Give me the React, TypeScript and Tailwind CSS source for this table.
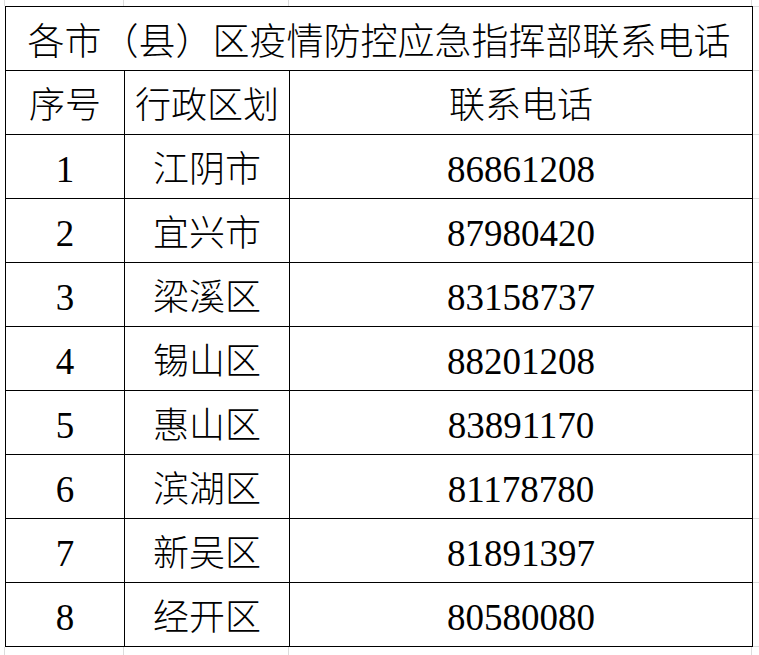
const rows = [
  { no: "1", area: "江阴市", tel: "86861208" },
  { no: "2", area: "宜兴市", tel: "87980420" },
  { no: "3", area: "梁溪区", tel: "83158737" },
  { no: "4", area: "锡山区", tel: "88201208" },
  { no: "5", area: "惠山区", tel: "83891170" },
  { no: "6", area: "滨湖区", tel: "81178780" },
  { no: "7", area: "新吴区", tel: "81891397" },
  { no: "8", area: "经开区", tel: "80580080" },
];

// spreadsheet gridlines that show outside the table
function GridStrip({ h }: { h: string }) {
  return (
    <div className={`flex ${h}`}>
      <div className="w-[5px] border-r border-[#dcdcdc]" />
      <div className="w-[119px] border-r border-[#dcdcdc]" />
      <div className="w-[165px] border-r border-[#dcdcdc]" />
      <div className="w-[463px] border-r border-[#dcdcdc]" />
      <div className="flex-1" />
    </div>
  );
}

const cell = "h-[64px] border-r border-b border-black flex items-center justify-center";
const zh = "text-[36px] font-light pt-[6px]";
const num = "text-[37px] pt-[6px] font-[Liberation_Serif,serif]";

export default function App() {
  return (
    <div className="w-[759px] h-[655px] bg-white overflow-hidden text-black font-[Liberation_Serif,Noto_Sans_CJK_SC,serif]">
      <GridStrip h="h-[6px]" />
      <div className="flex">
        <div className="w-[5px]" />
        <div className="w-[748px] border-l border-t border-black grid grid-cols-[119px_165px_463px]">
          <div className={`${cell} col-span-3 text-[37px] font-light pt-[8px]`}>各市（县）区疫情防控应急指挥部联系电话</div>
          <div className={`${cell} ${zh}`}>序号</div>
          <div className={`${cell} ${zh}`}>行政区划</div>
          <div className={`${cell} ${zh}`}>联系电话</div>
          {rows.map((r) => (
            <div key={r.no} className="contents">
              <div className={`${cell} ${num}`}>{r.no}</div>
              <div className={`${cell} ${zh}`}>{r.area}</div>
              <div className={`${cell} ${num}`}>{r.tel}</div>
            </div>
          ))}
        </div>
        <div className="flex-1 flex flex-col border-t border-[#dcdcdc]">
          {Array.from({ length: 10 }).map((_, i) => (
            <div key={i} className="h-[64px] border-b border-[#dcdcdc]" />
          ))}
        </div>
      </div>
      <GridStrip h="h-[8px]" />
    </div>
  );
}
